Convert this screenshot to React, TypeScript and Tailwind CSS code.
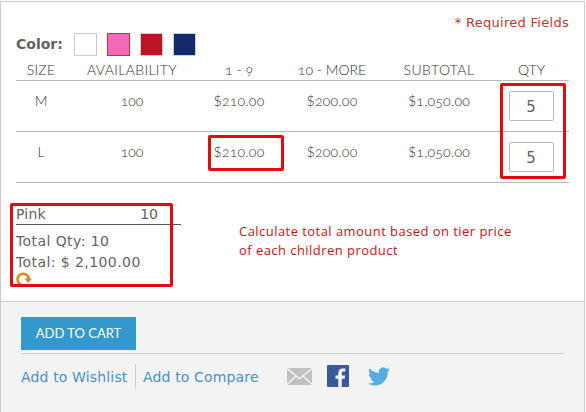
import type { ReactNode } from 'react';

const COLORS = [
  { name: 'White', cls: 'bg-white border-[#cccccc]' },
  { name: 'Pink', cls: 'bg-[#f668b8] border-[#c9302c]' },
  { name: 'Red', cls: 'bg-[#ba1526] border-[#cccccc]' },
  { name: 'Navy', cls: 'bg-[#12296b] border-[#cccccc]' },
];

const ROWS = ['M', 'L'];

const GRID = 'grid grid-cols-[50px_132px_82px_104px_110px_75px] text-center';

function Digits({ children, className = '' }: { children: ReactNode; className?: string }) {
  return <span className={`[font-feature-settings:'onum'] ${className}`}>{children}</span>;
}

function Price({ amount }: { amount: string }) {
  return (
    <div className="tracking-[0.25px]">
      $<Digits>{amount}</Digits>
    </div>
  );
}

function RefreshIcon() {
  return (
    <svg className="-mt-px block h-[15px] w-[16px]" viewBox="0 0 16 15" fill="none">
      <path d="M12.900 7.500A5.700 5.700 0 1 0 7.200 13.200" stroke="#e8851c" strokeWidth="2.600" />
      <path d="M8.400 6.500H16l-3.800 4.400z" fill="#e8851c" />
    </svg>
  );
}

function MailIcon() {
  return (
    <svg className="h-[17px] w-[25px]" viewBox="0 0 25 17" fill="none">
      <path d="M0 0h25v17H0z" fill="#c1c1c1" />
      <path d="M0 .5l12.5 10L25 .5M0 16.5l9-8.500M25 16.500l-9-8.500" stroke="#f4f4f4" strokeWidth="1.500" />
    </svg>
  );
}

function FacebookIcon() {
  return (
    <svg className="h-[22px] w-[22px]" viewBox="0 0 22 22">
      <rect width="22" height="22" rx="1" fill="#3b5998" />
      <path d="M11.300 22v-8.300H8.500v-3.300h2.800V8c0-3 1.700-4.500 4.400-4.500 1.200 0 2.300.1 2.600.1v3h-1.800c-1.400 0-1.700.7-1.700 1.700v2.100h3.300l-.4 3.300h-2.900V22z" fill="#f4f4f4" />
    </svg>
  );
}

function TwitterIcon() {
  return (
    <svg className="h-[19px] w-[22px]" viewBox="0 1.800 24 20.400" preserveAspectRatio="none">
      <path
        fill="#55acdf"
        d="M23.953 4.570a10 10 0 0 1-2.825.775 4.958 4.958 0 0 0 2.163-2.723c-.951.555-2.005.959-3.127 1.184a4.920 4.920 0 0 0-8.384 4.482C7.690 8.095 4.067 6.130 1.640 3.162a4.822 4.822 0 0 0-.666 2.475c0 1.710.870 3.213 2.188 4.096a4.904 4.904 0 0 1-2.228-.616v.060a4.923 4.923 0 0 0 3.946 4.827 4.996 4.996 0 0 1-2.212.085 4.936 4.936 0 0 0 4.604 3.417 9.867 9.867 0 0 1-6.102 2.105c-.390 0-.779-.023-1.170-.067a13.995 13.995 0 0 0 7.557 2.209c9.053 0 13.998-7.496 13.998-13.985 0-.210 0-.420-.015-.630A9.935 9.935 0 0 0 24 4.590z"
      />
    </svg>
  );
}

export default function App() {
  return (
    <div className="h-[412px] w-[586px] overflow-hidden bg-white pt-px font-['DejaVu_Sans',sans-serif] text-[14px] text-[#636363]">
      <div className="relative h-[411px] w-[585px] border-x border-t border-[#cccccc]">
        <section className="h-[299px] pl-[15px]">
          <div className="flex h-[31px] justify-end pt-[12px] pr-[15px] leading-[18px] text-[#c0392b]">
            <span className="text-[13px] tracking-[0.28px]">* Required Fields</span>
          </div>

          <div className="flex h-[27px]">
            <span className="w-[58px] pt-[2px] leading-[18px] font-bold">Color:</span>
            <div className="flex gap-[10px]">
              {COLORS.map((c) => (
                <span key={c.name} className={`h-[23px] w-[23px] border ${c.cls}`} />
              ))}
            </div>
          </div>

          <div className="w-[553px] font-['Lato',sans-serif] text-[14px] font-light text-[#333333]">
            <div className={`${GRID} h-[21px] border-b border-[#bbbbbb] pt-px leading-[18px]`}>
              <span className="tracking-[0.2px]">SIZE</span>
              <span className="tracking-[0.35px]">AVAILABILITY</span>
              <Digits>1 - 9</Digits>
              <span><Digits>10</Digits> - MORE</span>
              <span className="tracking-[0.4px]">SUBTOTAL</span>
              <span>QTY</span>
            </div>
            {ROWS.map((size) => (
              <div key={size} className={`${GRID} h-[51px] border-b border-[#bbbbbb] pt-[10px] leading-[20px]`}>
                <span>{size}</span>
                <Digits>100</Digits>
                <Price amount="210.00" />
                <Price amount="200.00" />
                <Price amount="1,050.00" />
                <span className="ml-[15px] flex h-[30px] w-[45px] items-center justify-center rounded-[2px] border border-[#bbbbbb] bg-white pt-[2px] pr-px font-['DejaVu_Sans',sans-serif] text-[15px] font-normal text-[#636363]">
                  5
                </span>
              </div>
            ))}
          </div>

          <div className="flex pt-[22px]">
            <div className="w-[165px]">
              <div className="flex h-[20px] justify-between border-b border-[#555555] pr-[23px] leading-[19px]">
                <span className="tracking-[0.2px]">Pink</span>
                <span>10</span>
              </div>
              <div className="pt-[6px] leading-[21px] tracking-[0.42px]">
                <div>Total Qty: 10</div>
                <div>Total: $ 2,100.00</div>
              </div>
              <RefreshIcon />
            </div>
            <p className="pt-[17px] pl-[58px] font-['Open_Sans',sans-serif] text-[13px] leading-[19px] tracking-[0.45px] whitespace-nowrap text-[#cc1111]">
              Calculate total amount based on tier price
              <br />
              of each children product
            </p>
          </div>
        </section>

        <footer className="h-[111px] border-t border-[#cccccc] bg-[#f3f3f3] pt-[15px] pl-[20px]">
          <button className="block h-[33px] w-[115px] bg-[#3399cc] pt-px font-['Lato',sans-serif] text-[13px] text-white">
            ADD TO CART
          </button>
          <div className="mt-[3px] flex w-[543px] items-center border-t border-[#cccccc] pt-[10px] tracking-[0.15px] text-[#4a90c5]">
            <a className="w-[114px] pt-[2px] whitespace-nowrap">Add to Wishlist</a>
            <a className="flex h-[25px] w-[152px] items-center border-l border-[#cccccc] pt-[2px] pl-[7px] whitespace-nowrap">
              Add to Compare
            </a>
            <MailIcon />
            <div className="-mt-px flex pl-[15px]">
              <FacebookIcon />
            </div>
            <div className="-mt-px flex pl-[19px]">
              <TwitterIcon />
            </div>
          </div>
        </footer>

        <div className="absolute top-[81px] left-[499px] h-[96px] w-[66px] rounded-[2px] border-3 border-[#e30b10]" />
        <div className="absolute top-[133px] left-[207px] h-[36px] w-[76px] rounded-[2px] border-3 border-[#e30b10]" />
        <div className="absolute top-[201px] left-[9px] h-[84px] w-[163px] rounded-[2px] border-3 border-[#e30b10]" />
      </div>
    </div>
  );
}
